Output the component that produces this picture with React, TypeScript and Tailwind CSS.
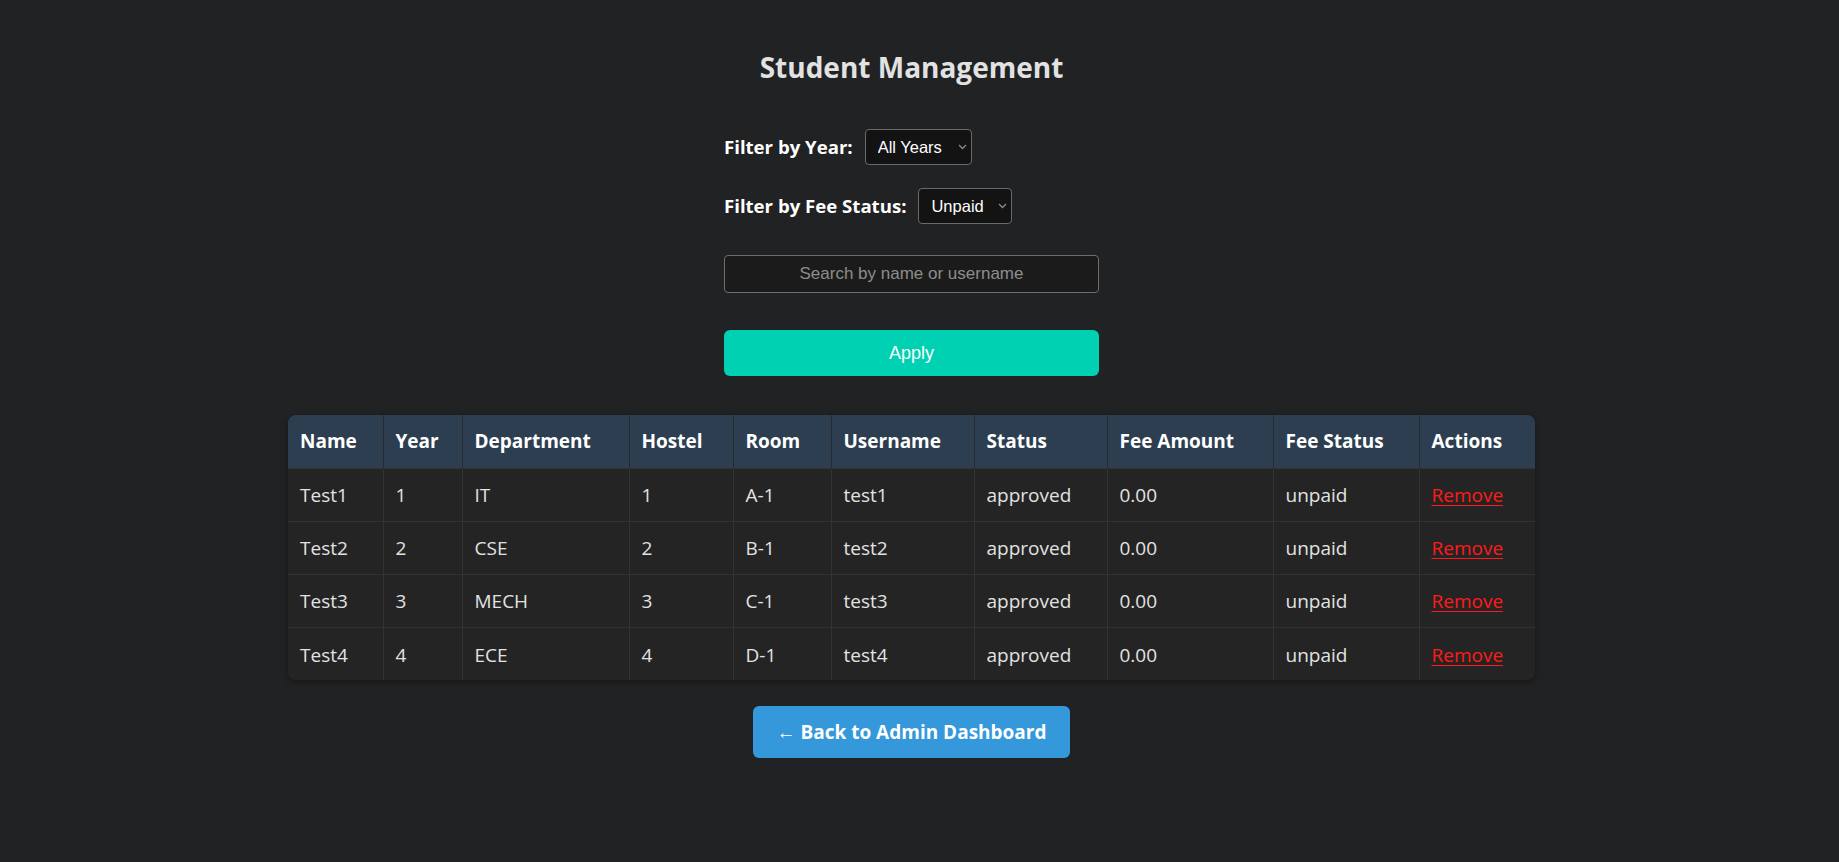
import React from "react";

const students = [
  { name: "Test1", year: 1, dept: "IT", hostel: 1, room: "A-1", username: "test1" },
  { name: "Test2", year: 2, dept: "CSE", hostel: 2, room: "B-1", username: "test2" },
  { name: "Test3", year: 3, dept: "MECH", hostel: 3, room: "C-1", username: "test3" },
  { name: "Test4", year: 4, dept: "ECE", hostel: 4, room: "D-1", username: "test4" },
];

const headers = [
  { label: "Name", w: "w-[95px]" },
  { label: "Year", w: "w-[79px]" },
  { label: "Department", w: "w-[167px]" },
  { label: "Hostel", w: "w-[104px]" },
  { label: "Room", w: "w-[98px]" },
  { label: "Username", w: "w-[143px]" },
  { label: "Status", w: "w-[133px]" },
  { label: "Fee Amount", w: "w-[166px]" },
  { label: "Fee Status", w: "w-[146px]" },
  { label: "Actions", w: "w-[116px]" },
];

function Chevron() {
  return (
    <svg
      className="pointer-events-none absolute right-[5px] top-1/2 -translate-y-1/2"
      width="9"
      height="6"
      viewBox="0 0 9 6"
      fill="none"
    >
      <path d="M1 1l3.5 3.5L8 1" stroke="#8a8a8a" strokeWidth="1.3" />
    </svg>
  );
}

function Select({ value, width }: { value: string; width: string }) {
  return (
    <div className={`relative ${width} h-[36px]`}>
      <select
        defaultValue={value}
        className="h-full w-full appearance-none rounded-[4px] border border-[#6a6a6a] bg-[#131313] pl-[12px] pr-5 text-[16.5px] text-white outline-none"
        style={{ fontFamily: "'Liberation Sans', Arial, sans-serif" }}
      >
        <option>{value}</option>
      </select>
      <Chevron />
    </div>
  );
}

export default function App() {
  return (
    <div
      className="min-h-screen bg-[#212224] pr-4 pt-[47px] text-[#e4e4e4]"
      style={{ fontFamily: "'Open Sans', 'Noto Sans', sans-serif" }}
    >
      <h1 className="text-center text-[28px] font-bold leading-[40px] text-[#e2e2e2]">
        Student Management
      </h1>

      <div className="mx-auto mt-[42px] w-[375px]">
        <div className="flex h-[36px] items-center">
          <label className="mr-[12px] text-[18.6px] font-bold text-white">Filter by Year:</label>
          <Select value="All Years" width="w-[107px]" />
        </div>
        <div className="mt-[23px] flex h-[36px] items-center">
          <label className="mr-[12px] text-[18.6px] font-bold text-white">Filter by Fee Status:</label>
          <Select value="Unpaid" width="w-[94px]" />
        </div>

        <input
          type="text"
          placeholder="Search by name or username"
          className="mt-[31px] block h-[38px] w-full rounded-[4px] border border-[#6e6e6e] bg-[#1b1b1b] text-center text-[17px] text-white outline-none placeholder:text-[#8d8d8d]"
          style={{ fontFamily: "'Liberation Sans', Arial, sans-serif" }}
        />

        <button
          className="mt-[37px] block h-[46px] w-full rounded-[6px] bg-[#00d1b2] text-[18px] text-white"
          style={{ fontFamily: "'Liberation Sans', Arial, sans-serif" }}
        >
          Apply
        </button>
      </div>

      <div className="mx-auto mt-[39px] w-[1247px] overflow-hidden rounded-[8px] bg-[#242424] shadow-[0_2px_6px_rgba(0,0,0,0.35)]">
        <table className="w-full table-fixed border-collapse text-left">
          <thead>
            <tr className="h-[53px] bg-[#2c3e50]">
              {headers.map((h, i) => (
                <th
                  key={h.label}
                  className={`${h.w} px-[12px] text-[19px] font-bold text-white ${
                    i > 0 ? "border-l border-[#262b30]" : ""
                  }`}
                >
                  {h.label}
                </th>
              ))}
            </tr>
          </thead>
          <tbody>
            {students.map((s) => (
              <tr key={s.username} className="h-[53px] border-t border-[#333333]">
                {[s.name, s.year, s.dept, s.hostel, s.room, s.username, "approved", "0.00", "unpaid"].map(
                  (v, i) => (
                    <td
                      key={i}
                      className={`px-[12px] pt-[2px] text-[19px] text-[#e2e2e2] ${
                        i > 0 ? "border-l border-[#333333]" : ""
                      }`}
                    >
                      {v}
                    </td>
                  )
                )}
                <td className="border-l border-[#333333] px-[12px] pt-[2px] text-[19px]">
                  <a href="#" className="text-[#ff1a1a] underline underline-offset-[3px]">
                    Remove
                  </a>
                </td>
              </tr>
            ))}
          </tbody>
        </table>
      </div>

      <div className="mt-[26px] flex justify-center pb-10">
        <button className="h-[52px] w-[317px] rounded-[6px] bg-[#3498db] text-[19px] font-bold text-white">
          ← Back to Admin Dashboard
        </button>
      </div>
    </div>
  );
}
